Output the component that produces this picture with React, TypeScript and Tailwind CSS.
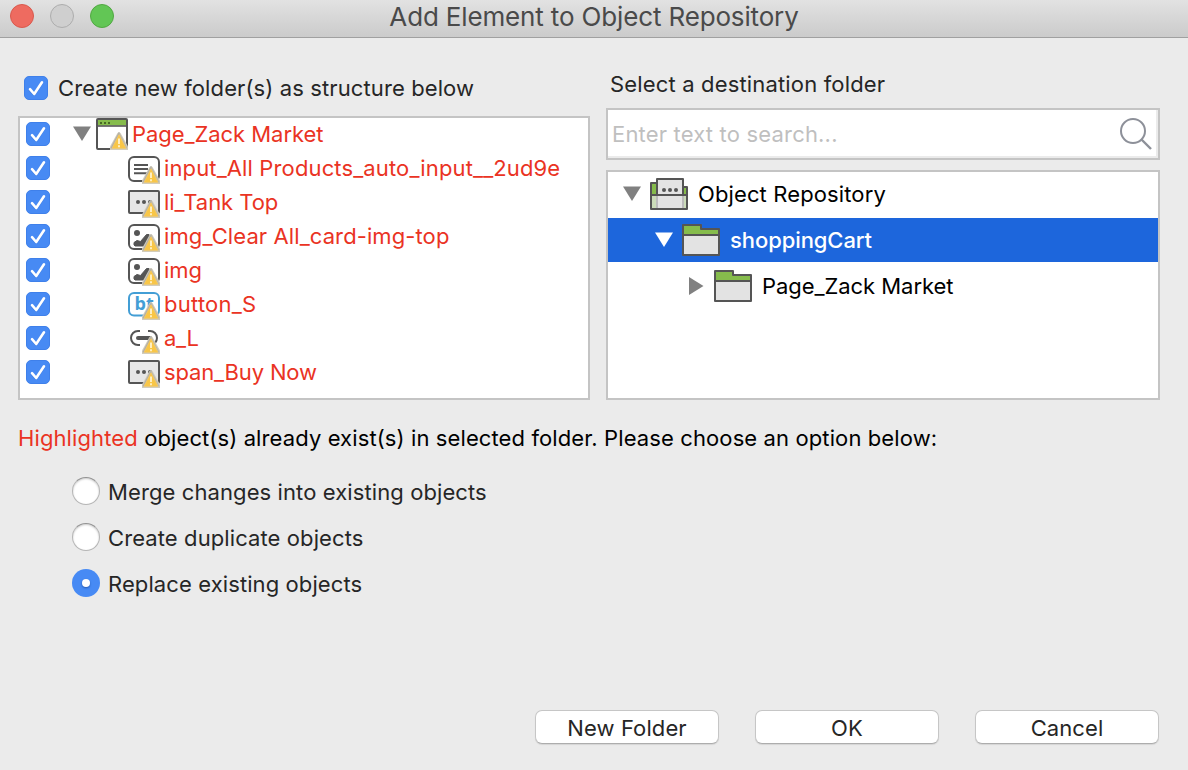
import type { ReactNode } from "react";

function Check() {
  return (
    <span className="flex size-6 shrink-0 items-center justify-center rounded-[5px] border border-[#3f80ea] bg-[#478af4]">
      <svg width="22" height="22" viewBox="0 0 22 22" fill="none">
        <path d="M5 12.9 9.2 17.6 17 5.9" stroke="#2f6bd0" strokeOpacity=".5" strokeWidth="2.6" strokeLinecap="round" strokeLinejoin="round" />
        <path d="M5 12.2 9.2 17 17 5.3" stroke="#fff" strokeWidth="2.6" strokeLinecap="round" strokeLinejoin="round" />
      </svg>
    </span>
  );
}

function Warning() {
  return (
    <g transform="translate(14 14)">
      <path d="M7.2 1.5Q9 -1 10.8 1.5L18 14.5V18H0V14.5Z" fill="#d3cdbb" />
      <path d="M9 1 1.2 16" stroke="#b3b0a8" strokeWidth="1.4" strokeLinecap="round" />
      <path d="M9 1 16.8 16" stroke="#bcb8ac" strokeWidth="1.2" strokeLinecap="round" />
      <path d="M9 2.8 15.8 16.2H2.2Z" fill="#f9c646" stroke="#f5c65a" strokeWidth=".8" strokeLinejoin="round" />
      <path d="M9 6.5V12" stroke="#fff3cf" strokeWidth="1.8" />
      <path d="M9 13.2V15.2" stroke="#fff3cf" strokeWidth="1.8" />
    </g>
  );
}

type Kind = "page" | "input" | "box" | "image" | "button" | "link";

function ObjectIcon({ kind }: { kind: Kind }) {
  return (
    <svg width="32" height="32" viewBox="0 0 32 32" fill="none" className="shrink-0">
      {kind === "page" && (
        <>
          <rect x="1" y="1" width="30" height="30" rx="1" fill="#fff" stroke="#555" strokeWidth="2" />
          <rect x="2" y="2" width="28" height="5.5" fill="#86bc4c" />
          <path d="M1 8H31" stroke="#555" strokeWidth="1.6" />
          <path d="M4 5h2M8 5h2M12 5h2" stroke="#486a25" strokeWidth="2" />
        </>
      )}
      {kind === "input" && (
        <>
          <rect x="1" y="5" width="30" height="24" rx="5" fill="#fff" stroke="#555" strokeWidth="2" />
          <path d="M6 12.9H20M6 17.1H20M6 21.3H20" stroke="#555" strokeWidth="2" />
        </>
      )}
      {kind === "box" && (
        <>
          <rect x="1" y="5" width="30" height="22" rx="1" fill="#e6e6e6" stroke="#555" strokeWidth="2" />
          <circle cx="10" cy="16" r="2" fill="#555" />
          <circle cx="16" cy="16" r="2" fill="#555" />
          <circle cx="22" cy="16" r="2" fill="#555" />
        </>
      )}
      {kind === "image" && (
        <>
          <rect x="1" y="5" width="30" height="24" rx="5" fill="#fff" stroke="#555" strokeWidth="2" />
          <circle cx="9" cy="13" r="3" fill="#555" />
          <path d="M6 25V22.5L9 20.5 12.5 21.5 18.5 14.5H21L26 20V26H7Z" fill="#555" stroke="#555" strokeLinejoin="round" />
        </>
      )}
      {kind === "button" && (
        <>
          <rect x="1" y="5" width="30" height="22.5" rx="5" fill="#fff" stroke="#439ed5" strokeWidth="2" />
          <text x="6.5" y="22" fill="#439ed5" fontSize="18" fontWeight="700" className="font-['Open_Sans',sans-serif]">
            bt
          </text>
        </>
      )}
      {kind === "link" && (
        <>
          <path d="M12 9H10A7 7 0 0 0 10 23H12M20 9H22A7 7 0 0 1 22 23H20" stroke="#555" strokeWidth="2" />
          <path d="M10 16H22" stroke="#555" strokeWidth="4" strokeLinecap="round" />
        </>
      )}
      <Warning />
    </svg>
  );
}

function Arrow({ open, className }: { open: boolean; className: string }) {
  return (
    <svg width="18" height="18" viewBox="0 0 18 18" className={className}>
      <path d={open ? "M0 1.5H18L9 16Z" : "M2 0V18L16.5 9Z"} fill="currentColor" />
    </svg>
  );
}

function Folder() {
  return (
    <svg width="38" height="32" viewBox="0 0 38 32" strokeLinejoin="round">
      <path d="M1 1H19V5H37V11H1Z" fill="#86bc4c" stroke="#555" strokeWidth="2" />
      <rect x="1" y="11" width="36" height="20" fill="#e3e3e3" stroke="#555" strokeWidth="2" />
    </svg>
  );
}

function Repository() {
  return (
    <svg width="38" height="32" viewBox="0 0 38 32" strokeLinejoin="round">
      <path d="M1 5H8V17H1ZM30 9H37V17H30Z" fill="#86bc4c" stroke="#555" strokeWidth="2" />
      <rect x="1" y="17" width="36" height="14" fill="#e3e3e3" />
      <path d="M1 17H6V31H1ZM34 17H37V31H34Z" fill="#cbdcb9" />
      <path d="M6 17H8V31H6ZM32 17H34V31H32Z" fill="#bbb" />
      <path d="M7 17V1H33V17" fill="#e3e3e3" stroke="#555" strokeWidth="2" />
      <rect x="1" y="17" width="36" height="14" fill="none" stroke="#555" strokeWidth="2" />
      <circle cx="14" cy="12" r="2" fill="#555" />
      <circle cx="20" cy="12" r="2" fill="#555" />
      <circle cx="26" cy="12" r="2" fill="#555" />
    </svg>
  );
}

const objects: { kind: Kind; name: string; track: string }[] = [
  { kind: "input", name: "input_All Products_auto_input__2ud9e", track: "tracking-[0.13px]" },
  { kind: "box", name: "li_Tank Top", track: "tracking-[-0.05px]" },
  { kind: "image", name: "img_Clear All_card-img-top", track: "tracking-[0.1px]" },
  { kind: "image", name: "img", track: "tracking-normal" },
  { kind: "button", name: "button_S", track: "tracking-[0.25px]" },
  { kind: "link", name: "a_L", track: "tracking-[-0.3px]" },
  { kind: "box", name: "span_Buy Now", track: "tracking-[-0.16px]" },
];

function Radio({ on, children }: { on?: boolean; children: ReactNode }) {
  return (
    <div className="flex h-[46px] items-center">
      {on ? (
        <span className="mr-2 flex size-7 items-center justify-center rounded-full bg-[#478af4]">
          <span className="size-2 rounded-full bg-white shadow-[0_1px_2px_#2459b0]" />
        </span>
      ) : (
        <span className="mr-2 size-7 rounded-full border border-[#b5b5b5] border-t-[#929292] bg-white shadow-[inset_0_1px_2px_#ccc]" />
      )}
      <span className="pt-px tracking-[0.1px] text-[#262626]">{children}</span>
    </div>
  );
}

function Button({ children }: { children: ReactNode }) {
  return (
    <button className="flex h-[34px] w-[184px] items-center justify-center rounded-[7px] border border-[#c6c6c6] border-b-[#adadad] bg-white pt-px tracking-[0.1px] text-[#262626] shadow-[0_1px_1px_#00000018]">
      {children}
    </button>
  );
}

export default function App() {
  return (
    <div className="flex h-[770px] w-[1188px] flex-col overflow-hidden whitespace-nowrap bg-[#ebebeb] font-[Inter,sans-serif] text-[22px] leading-7 text-black">
      <header className="grid h-[38px] shrink-0 grid-cols-[1fr_auto_1fr] border-b border-[#a0a0a0] bg-linear-to-b from-[#e2e2e2] to-[#cbcbcb] pl-[10px] pr-[10px]">
        <div className="flex gap-4 pt-1">
          <span className="size-6 rounded-full border border-[#d9594d] bg-[#ee6b60]" />
          <span className="size-6 rounded-full border border-[#adadad] bg-[#cfcfcf]" />
          <span className="size-6 rounded-full border border-[#51a842] bg-[#62c655]" />
        </div>
        <h1 className="pt-[3px] text-[26px] tracking-[-0.15px] text-[#4a4a4a]">Add Element to Object Repository</h1>
      </header>
      <main className="flex gap-4 pl-[18px]">
        <section className="w-[572px]">
          <label className="flex h-[78px] items-center gap-[10px] pl-1.5 pt-[22px] text-[#262626]">
            <Check />
            <span className="tracking-[0.11px]">Create new folder(s) as structure below</span>
          </label>
          <div className="h-[284px] border-2 border-[#c4c4c4] bg-white text-[#ea3323]">
            <div className="-mt-px flex h-[34px] items-center pl-1.5">
              <Check />
              <Arrow open className="ml-[23px] mr-[5px] text-[#808080]" />
              <ObjectIcon kind="page" />
              <span className="pl-1 tracking-[-0.05px]">Page_Zack Market</span>
            </div>
            {objects.map((o) => (
              <div key={o.name} className="flex h-[34px] items-center pl-1.5">
                <Check />
                <span className="w-[78px]" />
                <ObjectIcon kind={o.kind} />
                <span className={`pl-1 ${o.track}`}>{o.name}</span>
              </div>
            ))}
          </div>
        </section>
        <section className="w-[554px]">
          <h2 className="h-[70px] pl-1 pt-8 tracking-[0.16px] text-[#262626]">Select a destination folder</h2>
          <div className="flex h-[52px] items-center justify-between border-2 border-[#c4c4c4] bg-white pl-1 pr-1.5 shadow-[inset_-2px_-2px_#ebebeb]">
            <span className="tracking-[0.18px] text-[#bfbfbf]">Enter text to search...</span>
            <svg width="34" height="34" viewBox="0 0 34 34" fill="none" stroke="#8d9099" strokeWidth="2">
              <circle cx="15" cy="14" r="12" />
              <path d="M23.5 22.5 33 32" strokeWidth="2.4" />
            </svg>
          </div>
          <div className="mt-[10px] flex h-[230px] flex-col gap-0.5 border-2 border-[#c4c4c4] bg-white">
            <div className="flex h-11 items-center pl-[15px]">
              <Arrow open className="mr-[9px] text-[#808080]" />
              <Repository />
              <span className="pl-[10px] tracking-[0.12px]">Object Repository</span>
            </div>
            <div className="flex h-11 items-center bg-[#1d66dc] pl-[47px] text-white">
              <Arrow open className="mr-[9px]" />
              <Folder />
              <span className="pl-[10px] font-medium tracking-[-0.08px]">shoppingCart</span>
            </div>
            <div className="flex h-11 items-center pl-[79px]">
              <Arrow open={false} className="mr-[9px] text-[#808080]" />
              <Folder />
              <span className="pl-[10px] tracking-[-0.05px]">Page_Zack Market</span>
            </div>
          </div>
        </section>
      </main>
      <p className="pl-[18px] pt-6 tracking-[0.11px]">
        <span className="text-[#ea3323]">Highlighted</span> object(s) already exist(s) in selected folder. Please choose an option below:
      </p>
      <div className="pl-[72px] pt-4">
        <Radio>Merge changes into existing objects</Radio>
        <Radio>Create duplicate objects</Radio>
        <Radio on>Replace existing objects</Radio>
      </div>
      <footer className="mt-auto flex justify-end gap-9 pb-[26px] pr-[29px]">
        <Button>New Folder</Button>
        <Button>OK</Button>
        <Button>Cancel</Button>
      </footer>
    </div>
  );
}
